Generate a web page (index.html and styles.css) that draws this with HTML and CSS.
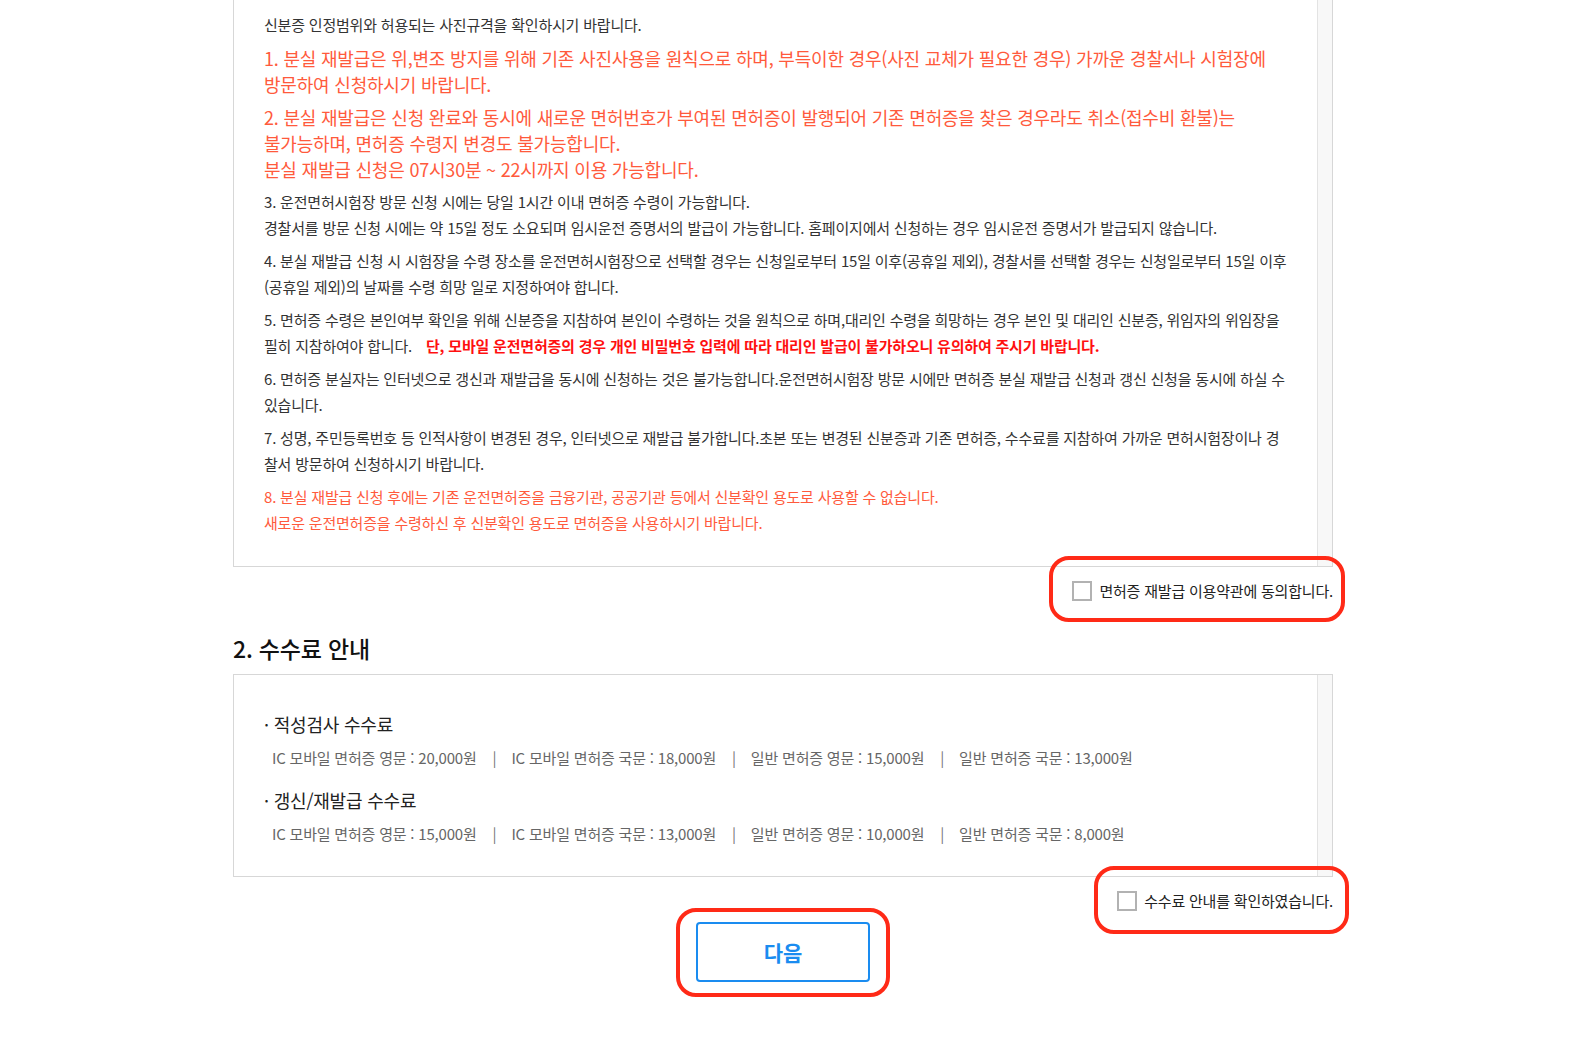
FILE: index.html
```html
<!DOCTYPE html>
<html lang="ko">
<head>
<meta charset="utf-8">
<title>면허증 재발급</title>
<link rel="stylesheet" href="styles.css">
</head>
<body>
<div class="page">
  <div class="terms-box">
    <div class="terms-content">
      <p class="small">신분증 인정범위와 허용되는 사진규격을 확인하시기 바랍니다.</p>
      <p class="big red">1. 분실 재발급은 위,변조 방지를 위해 기존 사진사용을 원칙으로 하며, 부득이한 경우(사진 교체가 필요한 경우) 가까운 경찰서나 시험장에 방문하여 신청하시기 바랍니다.</p>
      <p class="big red">2. 분실 재발급은 신청 완료와 동시에 새로운 면허번호가 부여된 면허증이 발행되어 기존 면허증을 찾은 경우라도 취소(접수비 환불)는 불가능하며, 면허증 수령지 변경도 불가능합니다.<br>분실 재발급 신청은 07시30분 ~ 22시까지 이용 가능합니다.</p>
      <p class="small">3. 운전면허시험장 방문 신청 시에는 당일 1시간 이내 면허증 수령이 가능합니다.<br>경찰서를 방문 신청 시에는 약 15일 정도 소요되며 임시운전 증명서의 발급이 가능합니다. 홈페이지에서 신청하는 경우 임시운전 증명서가 발급되지 않습니다.</p>
      <p class="small">4. 분실 재발급 신청 시 시험장을 수령 장소를 운전면허시험장으로 선택할 경우는 신청일로부터 15일 이후(공휴일 제외), 경찰서를 선택할 경우는 신청일로부터 15일 이후 (공휴일 제외)의 날짜를 수령 희망 일로 지정하여야 합니다.</p>
      <p class="small">5. 면허증 수령은 본인여부 확인을 위해 신분증을 지참하여 본인이 수령하는 것을 원칙으로 하며,대리인 수령을 희망하는 경우 본인 및 대리인 신분증, 위임자의 위임장을 필히 지참하여야 합니다. <strong class="alert">단, 모바일 운전면허증의 경우 개인 비밀번호 입력에 따라 대리인 발급이 불가하오니 유의하여 주시기 바랍니다.</strong></p>
      <p class="small">6. 면허증 분실자는 인터넷으로 갱신과 재발급을 동시에 신청하는 것은 불가능합니다.운전면허시험장 방문 시에만 면허증 분실 재발급 신청과 갱신 신청을 동시에 하실 수 있습니다.</p>
      <p class="small">7. 성명, 주민등록번호 등 인적사항이 변경된 경우, 인터넷으로 재발급 불가합니다.초본 또는 변경된 신분증과 기존 면허증, 수수료를 지참하여 가까운 면허시험장이나 경찰서 방문하여 신청하시기 바랍니다.</p>
      <p class="small red">8. 분실 재발급 신청 후에는 기존 운전면허증을 금융기관, 공공기관 등에서 신분확인 용도로 사용할 수 없습니다.<br>새로운 운전면허증을 수령하신 후 신분확인 용도로 면허증을 사용하시기 바랍니다.</p>
    </div>
    <div class="scroll-track"></div>
  </div>

  <div class="agree-row agree-terms">
    <label class="agree">
      <span class="check"></span>
      <span class="agree-text">면허증 재발급 이용약관에 동의합니다.</span>
      <span class="mark"></span>
    </label>
  </div>

  <h2 class="section-title">2. 수수료 안내</h2>

  <div class="fee-box">
    <div class="fee-content">
      <div class="fee-group">
        <h3 class="fee-title">· 적성검사 수수료</h3>
        <ul class="fee-list">
          <li>IC 모바일 면허증 영문 : 20,000원</li>
          <li>IC 모바일 면허증 국문 : 18,000원</li>
          <li>일반 면허증 영문 : 15,000원</li>
          <li>일반 면허증 국문 : 13,000원</li>
        </ul>
      </div>
      <div class="fee-group">
        <h3 class="fee-title">· 갱신/재발급 수수료</h3>
        <ul class="fee-list">
          <li>IC 모바일 면허증 영문 : 15,000원</li>
          <li>IC 모바일 면허증 국문 : 13,000원</li>
          <li>일반 면허증 영문 : 10,000원</li>
          <li>일반 면허증 국문 : 8,000원</li>
        </ul>
      </div>
    </div>
    <div class="scroll-track"></div>
  </div>

  <div class="agree-row agree-fee">
    <label class="agree">
      <span class="check"></span>
      <span class="agree-text">수수료 안내를 확인하였습니다.</span>
      <span class="mark"></span>
    </label>
  </div>

  <div class="btn-row">
    <div class="btn-wrap">
      <button class="btn-next" type="button">다음</button>
      <span class="mark"></span>
    </div>
  </div>
</div>
</body>
</html>
```

FILE: styles.css
```css
* { box-sizing: border-box; }

html, body {
  margin: 0;
  padding: 0;
  background: #fff;
}

body {
  font-family: "Noto Sans CJK KR", "Noto Sans", sans-serif;
  color: #333;
  letter-spacing: -0.2px;
}

.page {
  width: 1100px;
  margin-left: 233px;
  padding-bottom: 40px;
}

/* terms box (scrolled) */
.terms-box {
  display: flex;
  margin-top: -30px;
  border: 1px solid #d7d7d7;
  height: 597px;
}

.terms-content {
  flex: 1;
  padding: 41px 26px 0 30px;
}

.scroll-track {
  width: 15px;
  background: #f8f8f8;
  border-left: 1px solid #e3e3e3;
}

.terms-content p {
  margin: 0 0 7px 0;
  line-height: 26px;
}

.small { font-size: 15px; color: #333; }
.big { font-size: 18px; word-break: keep-all; }
.red { color: #ff5a3c; }

.alert {
  color: #ff1010;
  font-weight: 700;
  margin-left: 10px;
}

/* agreement rows */
.agree-row {
  display: flex;
  justify-content: flex-end;
  height: 20px;
}

.agree-terms { margin-top: 14px; }
.agree-fee { margin-top: 14px; }

.agree {
  position: relative;
  display: flex;
  align-items: center;
  gap: 7px;
  font-size: 15px;
  color: #222;
  line-height: 20px;
}

.check {
  width: 20px;
  height: 20px;
  border: 2px solid #b2b2b2;
  background: #fff;
}

.agree .mark {
  position: absolute;
  left: -23px;
  right: -12px;
  top: -25px;
  bottom: -21px;
  border: 4px solid #ff2a17;
  border-radius: 20px;
  pointer-events: none;
}

.agree-fee .agree .mark {
  right: -16px;
  bottom: -23px;
}

/* section title */
.section-title {
  margin: 31px 0 0 0;
  font-size: 23px;
  font-weight: 500;
  color: #111;
  line-height: 32px;
}

/* fee box */
.fee-box {
  display: flex;
  margin-top: 10px;
  border: 1px solid #d7d7d7;
  height: 203px;
}

.fee-content {
  flex: 1;
  padding: 36px 30px 0 30px;
}

.fee-group + .fee-group { margin-top: 16px; }

.fee-title {
  margin: 0;
  font-size: 18px;
  font-weight: 400;
  color: #222;
  line-height: 26px;
}

.fee-list {
  display: flex;
  margin: 8px 0 0 0;
  padding: 0 0 0 8px;
  list-style: none;
  font-size: 15px;
  color: #666;
  line-height: 26px;
}

.fee-list li + li::before {
  content: "|";
  margin: 0 15px 0 16px;
  color: #777;
}

/* next button */
.btn-row {
  display: flex;
  justify-content: center;
  margin-top: 11px;
}

.btn-wrap {
  position: relative;
}

.btn-next {
  display: block;
  width: 174px;
  height: 60px;
  border: 2px solid #1a8cf0;
  border-radius: 4px;
  background: #fff;
  color: #1a8cf0;
  font-family: "Noto Sans CJK KR", sans-serif;
  font-size: 21px;
  font-weight: 700;
  letter-spacing: 0;
  padding: 0;
}

.btn-wrap .mark {
  position: absolute;
  left: -20px;
  right: -20px;
  top: -14px;
  bottom: -15px;
  border: 4px solid #ff2a17;
  border-radius: 20px;
  pointer-events: none;
}
```
